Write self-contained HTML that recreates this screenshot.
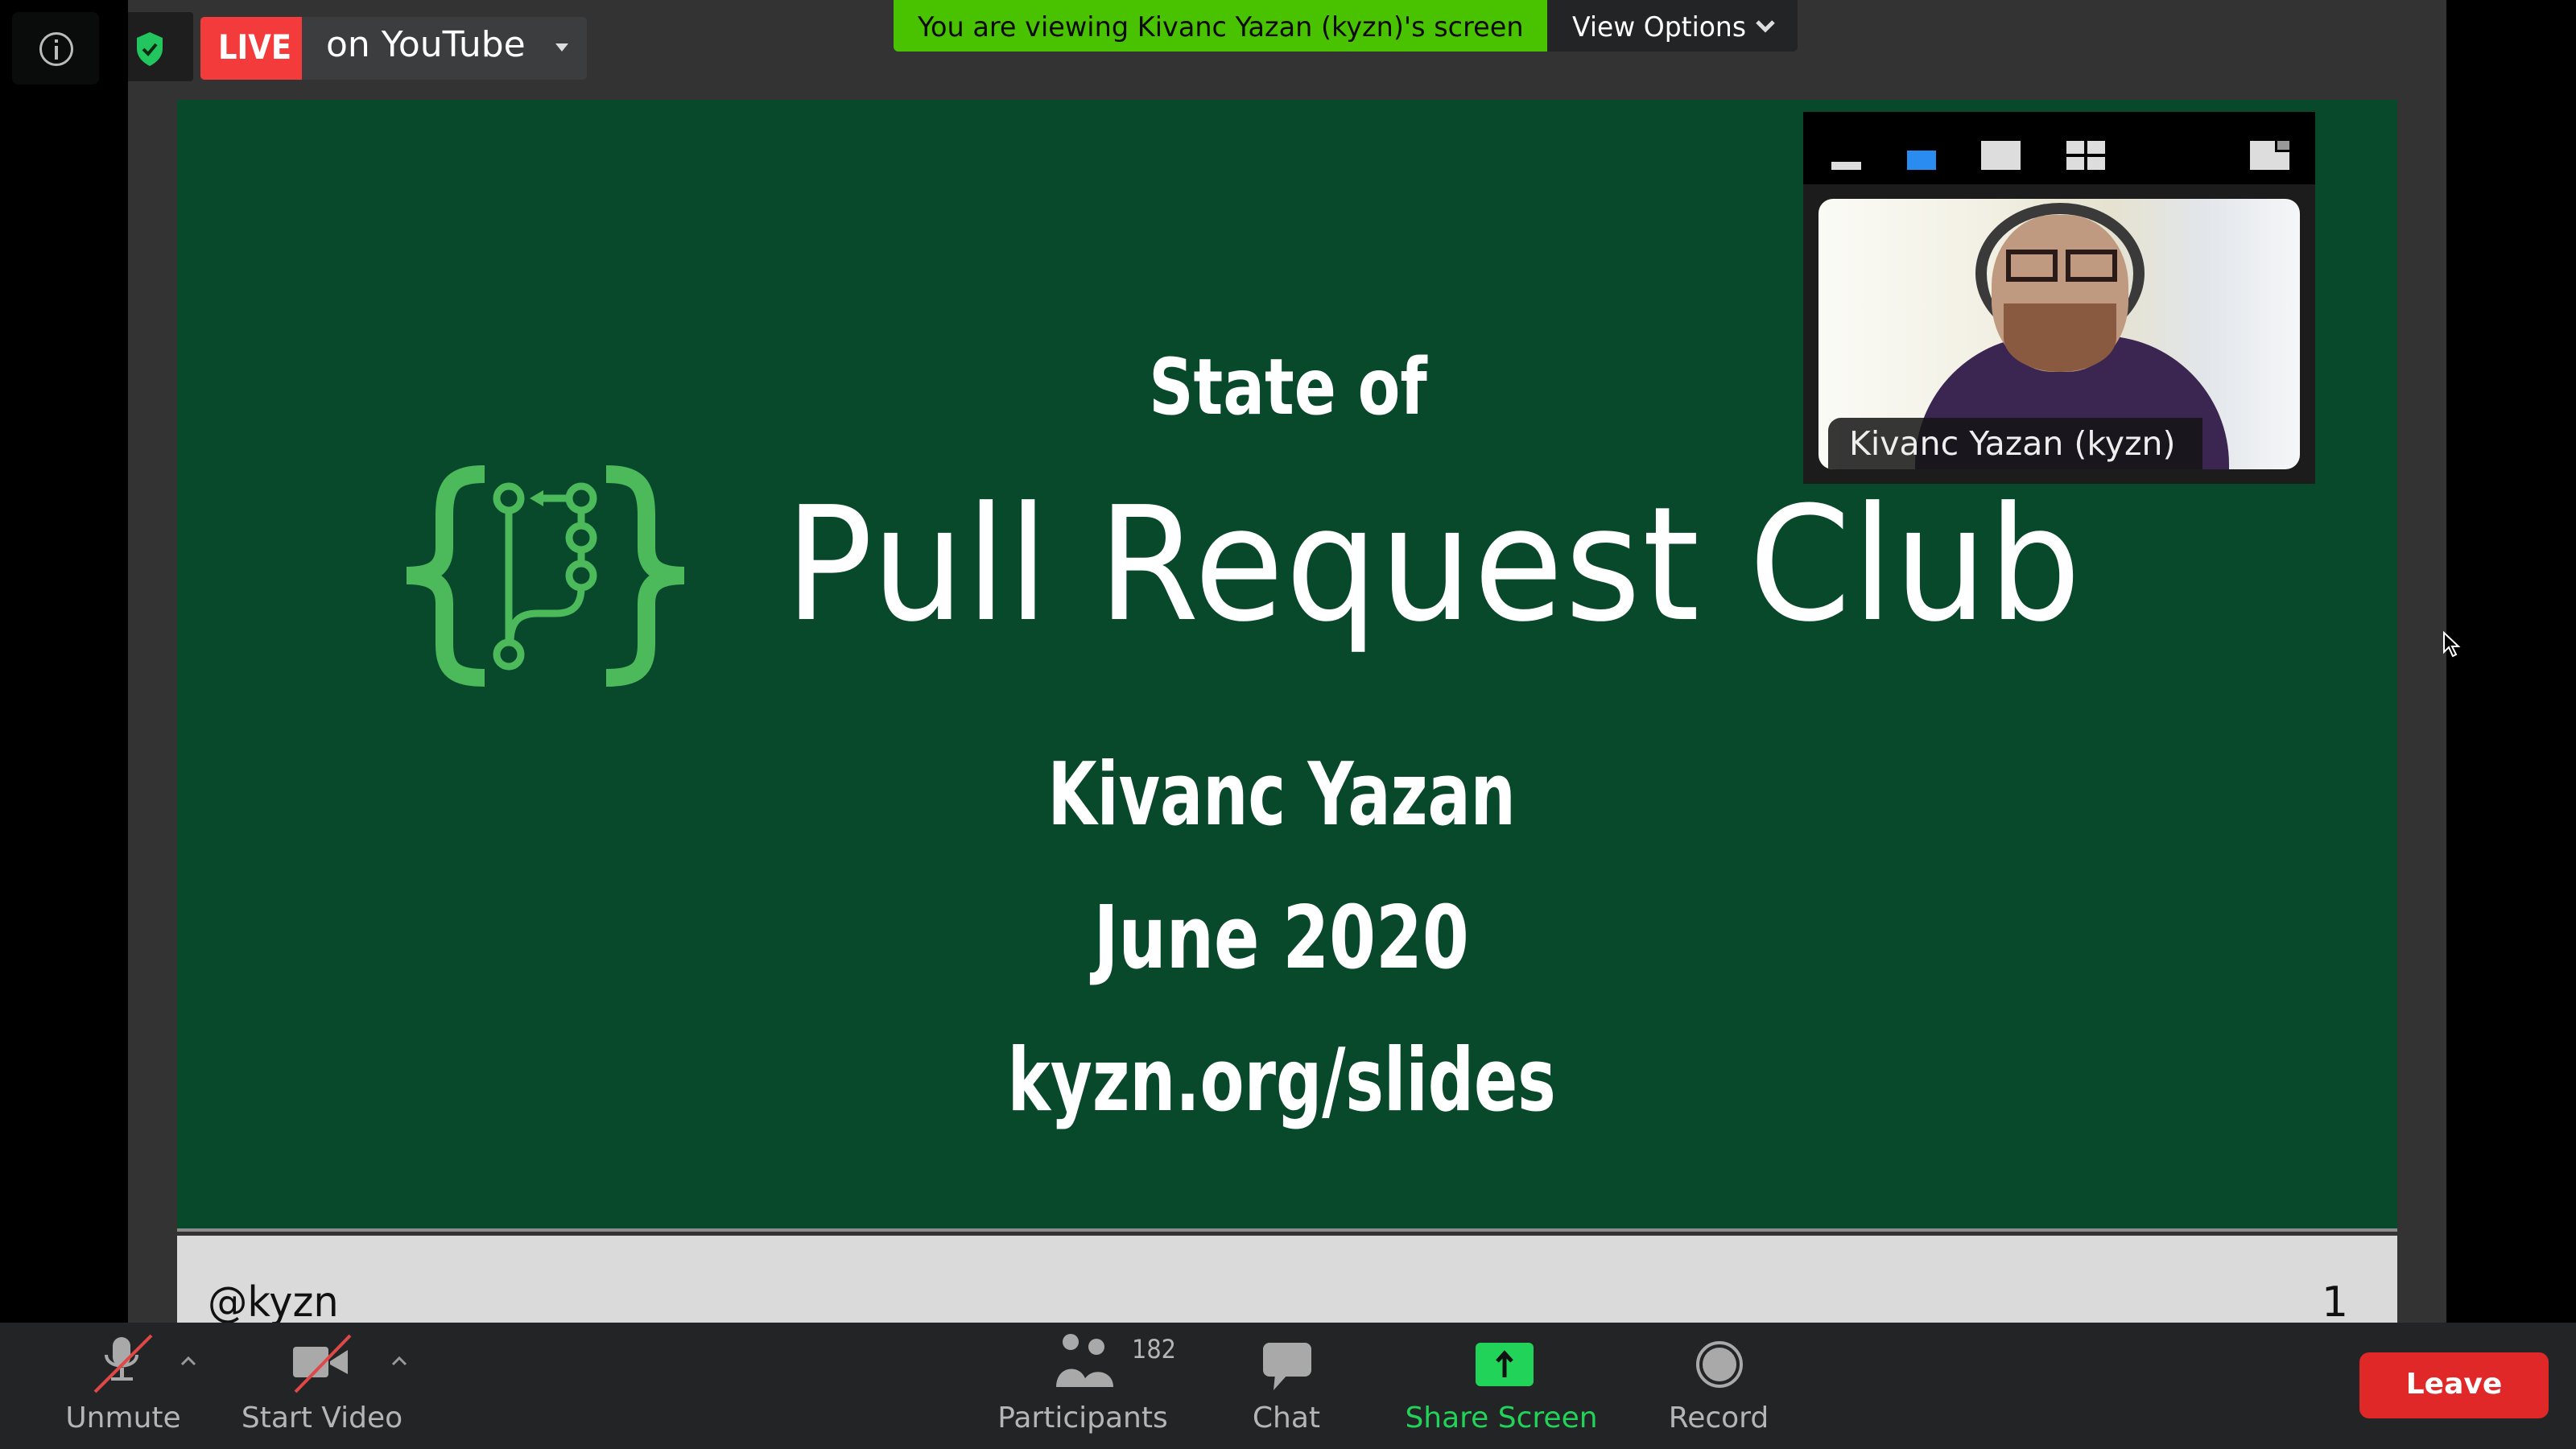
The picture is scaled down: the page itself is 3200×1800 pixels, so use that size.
<!DOCTYPE html>
<html><head><meta charset="utf-8"><style>
*{margin:0;padding:0;box-sizing:border-box}
body{width:3200px;height:1800px;background:#000;position:relative;overflow:hidden;font-family:"DejaVu Sans","Liberation Sans",sans-serif}
.a{position:absolute}
.t{position:absolute;white-space:nowrap}
</style></head><body>
<div class="a" style="left:159px;top:0;width:2880px;height:1643px;background:#333"></div>
<!-- slide -->
<div class="a" style="left:220px;top:124px;width:2758px;height:1402px;background:#08492c"></div>
<div class="a" style="left:220px;top:1526px;width:2758px;height:4px;background:#8c8c8c"></div>
<div class="a" style="left:220px;top:1530px;width:2758px;height:5px;background:#333"></div>
<div class="a" style="left:220px;top:1535px;width:2758px;height:108px;background:#dadadb"></div>
<div class="t" style="left:258px;top:1588px;font-size:52px;color:#111;transform:scaleX(.95);transform-origin:left">@kyzn</div>
<div class="t" style="left:2884px;top:1588px;font-size:52px;color:#111">1</div>

<svg class="a" style="left:0;top:0" width="3200" height="1800">
<g fill="none" stroke="#4cb95b" stroke-width="22" stroke-linecap="butt">
<path d="M602 589 C565 589 552 600 552 640 L552 680 C552 705 538 715 505 715 C538 715 552 725 552 750 L552 800 C552 832 565 842 602 842"/>
<path d="M753 589 C790 589 803 600 803 640 L803 680 C803 705 817 715 850 715 C817 715 803 725 803 750 L803 800 C803 832 790 842 753 842"/>
</g>
<g fill="none" stroke="#4cb95b" stroke-width="9">
<circle cx="632" cy="619" r="15"/><circle cx="722" cy="619" r="15"/><circle cx="722" cy="668" r="15"/><circle cx="722" cy="715" r="15"/><circle cx="632" cy="813" r="15"/>
<path d="M632 634 L632 798"/><path d="M722 634 L722 653 M722 683 L722 700"/>
<path d="M722 730 C722 752 712 762 690 762 L668 762 C645 762 634 772 634 798"/>
<path d="M707 619 L665 619"/>
</g>
<path d="M658 619 L675 609 L675 629 Z" fill="#4cb95b"/>
</svg>

<div class="t" style="left:0;width:3200px;text-align:center;top:425px;font-size:96px;font-weight:bold;color:#fff"><span style="display:inline-block;transform:scaleX(.8)">State of</span></div>
<div class="t" style="left:975px;top:588px;font-size:196px;color:#fff;letter-spacing:2px;transform:scaleX(.925);transform-origin:left">Pull Request Club</div>
<div class="t" style="left:0;width:3184px;text-align:center;top:925px;font-size:108px;font-weight:bold;color:#fff"><span style="display:inline-block;transform:scaleX(.73)">Kivanc Yazan</span></div>
<div class="t" style="left:0;width:3184px;text-align:center;top:1103px;font-size:108px;font-weight:bold;color:#fff"><span style="display:inline-block;transform:scaleX(.77)">June 2020</span></div>
<div class="t" style="left:0;width:3184px;text-align:center;top:1280px;font-size:108px;font-weight:bold;color:#fff"><span style="display:inline-block;transform:scaleX(.74)">kyzn.org/slides</span></div>

<!-- video panel -->
<div class="a" style="left:2240px;top:139px;width:636px;height:462px;background:#1c1c1c"></div>
<div class="a" style="left:2240px;top:139px;width:636px;height:90px;background:#000"></div>
<div class="a" style="left:2275px;top:201px;width:37px;height:10px;background:#ddd"></div>
<div class="a" style="left:2369px;top:187px;width:36px;height:24px;background:#2a8cf0"></div>
<div class="a" style="left:2461px;top:175px;width:49px;height:36px;background:#ddd"></div>
<div class="a" style="left:2567px;top:175px;width:22px;height:16px;background:#ddd"></div>
<div class="a" style="left:2593px;top:175px;width:22px;height:16px;background:#ddd"></div>
<div class="a" style="left:2567px;top:195px;width:22px;height:16px;background:#ddd"></div>
<div class="a" style="left:2593px;top:195px;width:22px;height:16px;background:#ddd"></div>
<div class="a" style="left:2795px;top:175px;width:49px;height:36px;background:#ddd"></div>
<div class="a" style="left:2826px;top:175px;width:18px;height:14px;background:#000"></div>
<div class="a" style="left:2829px;top:175px;width:15px;height:11px;background:#999"></div>
<div class="a" style="left:2259px;top:247px;width:598px;height:336px;border-radius:18px;overflow:hidden;background:linear-gradient(90deg,#fbfbf6 0%,#f2f0e4 35%,#e6e2cf 60%,#e2e6ea 80%,#f5f6f8 100%)">
 <div class="a" style="left:120px;top:170px;width:390px;height:200px;border-radius:160px 160px 0 0;background:#3a2650"></div>
 <div class="a" style="left:195px;top:5px;width:210px;height:175px;border-radius:50%;border:14px solid #3a3a3a;border-bottom:none"></div>
 <div class="a" style="left:215px;top:20px;width:170px;height:195px;border-radius:45%;background:#c09a80"></div>
 <div class="a" style="left:230px;top:130px;width:140px;height:85px;border-radius:0 0 50% 50%;background:#8a5a40"></div>
 <div class="a" style="left:233px;top:63px;width:64px;height:40px;border:6px solid #2a1a18"></div>
 <div class="a" style="left:307px;top:63px;width:64px;height:40px;border:6px solid #2a1a18"></div>
 <div class="a" style="left:12px;top:272px;width:465px;height:64px;background:rgba(20,20,20,.85);border-radius:16px 0 0 0"></div>
 <div class="t" style="left:38px;top:280px;font-size:41px;color:#eee">Kivanc Yazan (kyzn)</div>
</div>

<!-- top left -->
<div class="a" style="left:15px;top:15px;width:108px;height:90px;background:#0a0b0b;border-radius:8px"></div>
<div class="a" style="left:49px;top:40px;width:42px;height:42px;border:3px solid #bbb;border-radius:50%"></div>
<div class="a" style="left:68px;top:49px;width:4px;height:4px;background:#bbb"></div>
<div class="a" style="left:68px;top:57px;width:4px;height:17px;background:#bbb"></div>
<div class="a" style="left:159px;top:15px;width:81px;height:86px;background:#1e1e1e;border-radius:0 4px 4px 0"></div>
<svg class="a" style="left:166px;top:38px" width="40" height="46"><path d="M20 2 L36 9 L36 22 C36 33 28 40 20 44 C12 40 4 33 4 22 L4 9 Z" fill="#22c55e"/><path d="M12 23 L18 29 L28 17" fill="none" stroke="#0a2a12" stroke-width="4"/></svg>
<div class="a" style="left:249px;top:21px;width:480px;height:78px;background:#3c3d3f;border-radius:5px"></div>
<div class="a" style="left:249px;top:21px;width:126px;height:78px;background:#f43b3b;border-radius:5px 0 0 5px"></div>
<div class="t" style="left:271px;top:34px;font-size:42px;font-weight:bold;color:#fff;transform:scaleX(.88);transform-origin:left">LIVE</div>
<div class="t" style="left:405px;top:30px;font-size:44px;color:#fff">on YouTube</div>
<svg class="a" style="left:688px;top:52px" width="20" height="14"><path d="M2 2 L18 2 L10 12 Z" fill="#ddd"/></svg>

<!-- top banner -->
<div class="a" style="left:1110px;top:0;width:812px;height:64px;background:#49c300;border-radius:0 0 0 6px"></div>
<div class="t" style="left:1140px;top:14px;font-size:34px;color:#0a0a0a;transform:scaleX(.985);transform-origin:left">You are viewing Kivanc Yazan (kyzn)'s screen</div>
<div class="a" style="left:1922px;top:0;width:311px;height:64px;background:#232426;border-radius:0 0 6px 0"></div>
<div class="t" style="left:1953px;top:14px;font-size:34px;color:#fff;transform:scaleX(.97);transform-origin:left">View Options</div>
<svg class="a" style="left:2180px;top:24px" width="26" height="18"><path d="M3 3 L13 13 L23 3" fill="none" stroke="#ddd" stroke-width="5"/></svg>

<!-- toolbar -->
<div class="a" style="left:0;top:1643px;width:3200px;height:157px;background:#232425"></div>
<svg class="a" style="left:0;top:1643px" width="3200" height="157">
<g fill="#a9a9a9">
<rect x="140" y="18" width="22" height="36" rx="11"/>
<path d="M132 40 C132 58 170 58 170 40" fill="none" stroke="#a9a9a9" stroke-width="4"/>
<rect x="149" y="56" width="5" height="14"/><rect x="138" y="68" width="27" height="4"/>
<rect x="364" y="30" width="44" height="38" rx="4"/><path d="M410 48 L432 34 L432 64 L410 52 Z"/>
<circle cx="1330" cy="24" r="10"/><circle cx="1362" cy="30" r="10"/>
<path d="M1312 80 C1312 50 1350 50 1350 80 Z"/><path d="M1345 80 C1345 55 1383 55 1383 80 Z"/>
<rect x="1569" y="25" width="60" height="42" rx="8"/><path d="M1584 64 L1582 84 L1600 64 Z"/>
</g>
<path d="M188 16 L118 86" stroke="#e04848" stroke-width="4"/>
<path d="M226 52 L234 44 L242 52 M488 52 L496 44 L504 52" stroke="#999" stroke-width="3" fill="none"/>
<path d="M435 16 L367 86" stroke="#e04848" stroke-width="4"/>
<rect x="1833" y="25" width="72" height="54" rx="6" fill="#22d35a"/>
<path d="M1869 68 L1869 40 M1860 48 L1869 38 L1878 48" stroke="#111" stroke-width="5" fill="none"/>
<circle cx="2136" cy="52" r="27" fill="none" stroke="#a9a9a9" stroke-width="4"/>
<circle cx="2136" cy="52" r="21" fill="#a9a9a9"/>
</svg>
<div class="t" style="left:1406px;top:1657px;font-size:32px;color:#b5b5b5;transform:scaleX(.9);transform-origin:left">182</div>
<div class="t" style="left:0;top:1741px;width:306px;text-align:center;font-size:36px;color:#b5b5b5">Unmute</div>
<div class="t" style="left:250px;top:1741px;width:300px;text-align:center;font-size:36px;color:#b5b5b5">Start Video</div>
<div class="t" style="left:1195px;top:1741px;width:300px;text-align:center;font-size:36px;color:#b5b5b5">Participants</div>
<div class="t" style="left:1448px;top:1741px;width:300px;text-align:center;font-size:36px;color:#b5b5b5">Chat</div>
<div class="t" style="left:1715px;top:1741px;width:300px;text-align:center;font-size:36px;color:#22d35a">Share Screen</div>
<div class="t" style="left:1985px;top:1741px;width:300px;text-align:center;font-size:36px;color:#b5b5b5">Record</div>
<div class="a" style="left:2931px;top:1680px;width:235px;height:82px;background:#e02828;border-radius:12px"></div>
<div class="t" style="left:2931px;top:1699px;width:235px;text-align:center;font-size:36px;font-weight:bold;color:#fff">Leave</div>
<svg class="a" style="left:3034px;top:784px" width="24" height="34"><path d="M2 2 L2 26 L8 20 L13 31 L17 29 L12 19 L20 19 Z" fill="#000" stroke="#fff" stroke-width="2"/></svg>
</body></html>
